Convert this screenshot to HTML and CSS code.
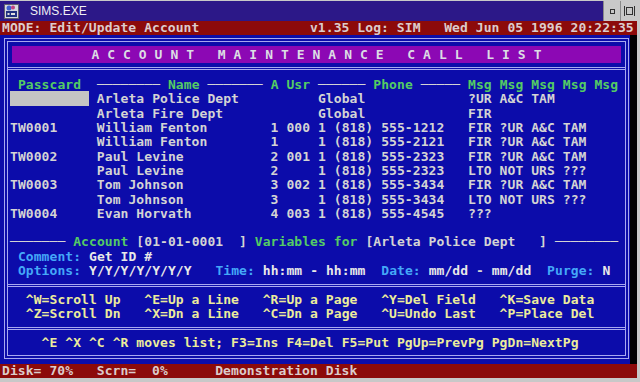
FILE: index.html
```html
<!DOCTYPE html>
<html lang="en">
<head>
    <meta charset="UTF-8">
    <meta name="viewport" content="width=device-width, initial-scale=1.0">
    <title>SIMS.EXE</title>
    <link rel="stylesheet" href="styles.css">
</head>
<body>
<div class="window">
    <div class="titlebar">
        <svg class="title-icon" width="15" height="15" viewBox="0 0 15 15">
            <rect x="0.5" y="0.5" width="14" height="14" fill="#d8d8e0" stroke="#606070"/>
            <circle cx="5" cy="4" r="2.5" fill="#4060d0"/>
            <circle cx="9" cy="3.5" r="2" fill="#c04080"/>
            <rect x="2" y="7" width="11" height="6" fill="#203080"/>
            <rect x="3.5" y="9" width="2" height="2" fill="#e0e0e0"/>
            <rect x="7" y="9" width="4" height="2" fill="#e0e0e0"/>
        </svg>
        <span class="title-text">SIMS.EXE</span>
        <div class="btns">
            <div class="btn">
                <svg width="5" height="5" viewBox="0 0 5 5"><rect x="0.5" y="0.5" width="4" height="4" fill="none" stroke="#303030"/></svg>
            </div>
            <div class="btn">
                <svg width="11" height="10" viewBox="0 0 11 10">
                    <rect x="0" y="0" width="1" height="10" fill="#303030"/>
                    <rect x="10" y="0" width="1" height="10" fill="#303030"/>
                    <rect x="2.5" y="1.5" width="6" height="7" fill="none" stroke="#303030"/>
                </svg>
            </div>
        </div>
    </div>

    <div class="console">
        <div class="row modebar">MODE: Edit/Update Account              v1.35 Log: SIM   Wed Jun 05 1996 20:22:35</div>

        <div class="screen">
            <div class="frame">
                <div class="banner">A C C O U N T   M A I N T E N A N C E   C A L L   L I S T</div>
                <div class="rule top-rule"></div>

                <div class="row in"> <span class="grn">Passcard</span>  ──────── <span class="grn">Name</span> ─────── <span class="grn">A Usr</span> ────── <span class="grn">Phone</span> ───── <span class="grn">Msg Msg Msg Msg Msg</span></div>
                <div class="row in"><span class="field">          </span> Arleta Police Dept          Global             ?UR A&amp;C TAM</div>
                <div class="row in">           Arleta Fire Dept            Global             FIR</div>
                <div class="row in">TW0001     William Fenton        1 000 1 (818) 555-1212   FIR ?UR A&amp;C TAM</div>
                <div class="row in">           William Fenton        1     1 (818) 555-2121   FIR ?UR A&amp;C TAM</div>
                <div class="row in">TW0002     Paul Levine           2 001 1 (818) 555-2323   FIR ?UR A&amp;C TAM</div>
                <div class="row in">           Paul Levine           2     1 (818) 555-2323   LTO NOT URS ???</div>
                <div class="row in">TW0003     Tom Johnson           3 002 1 (818) 555-3434   FIR ?UR A&amp;C TAM</div>
                <div class="row in">           Tom Johnson           3     1 (818) 555-3434   LTO NOT URS ???</div>
                <div class="row in">TW0004     Evan Horvath          4 003 1 (818) 555-4545   ???</div>
                <div class="row in"></div>
                <div class="row in">─────── <span class="grn">Account</span> [01-01-0001  ] <span class="grn">Variables for</span> [Arleta Police Dept   ] ────────</div>
                <div class="row in"> <span class="lbl">Comment:</span> <span class="val">Get ID #</span></div>
                <div class="row in"> <span class="lbl">Options:</span> <span class="val">Y/Y/Y/Y/Y/Y/Y</span>   <span class="lbl">Time:</span> <span class="val">hh:mm - hh:mm</span>  <span class="lbl">Date:</span> <span class="val">mm/dd</span> - <span class="val">mm/dd</span>  <span class="lbl">Purge:</span> <span class="val">N</span></div>
                <div class="sep"></div>
                <div class="row in yel">  ^W=Scroll Up   ^E=Up a Line   ^R=Up a Page   ^Y=Del Field   ^K=Save Data</div>
                <div class="row in yel">  ^Z=Scroll Dn   ^X=Dn a Line   ^C=Dn a Page   ^U=Undo Last   ^P=Place Del</div>
                <div class="sep"></div>
                <div class="row in yel">    ^E ^X ^C ^R moves list; F3=Ins F4=Del F5=Put PgUp=PrevPg PgDn=NextPg</div>
            </div>
        </div>

        <div class="row status">Disk= 70%   Scrn=  0%      Demonstration Disk</div>
    </div>
</div>
</body>
</html>
```

FILE: styles.css
```css
body {
    margin: 0;
    width: 640px;
    height: 382px;
    overflow: hidden;
    background: #c8c8c8;
}
.window {
    width: 637px;
}
.titlebar {
    height: 20px;
    margin-top: 1px;
    background: #2c1888;
    display: flex;
    align-items: center;
}
.title-icon {
    margin-left: 4px;
}
.title-text {
    flex: 1;
    margin-left: 11px;
    font: 12px "Liberation Sans", Arial, sans-serif;
    color: #f0f0f4;
}
.btns {
    display: flex;
    height: 20px;
}
.btn {
    width: 17px;
    height: 20px;
    box-sizing: border-box;
    background: #c8c8c8;
    border-left: 1px solid #8a8a8a;
    display: flex;
    align-items: center;
    justify-content: center;
}
.console {
    background: #000;
    font-family: "DejaVu Sans Mono", monospace;
    font-size: 13px;
    font-weight: bold;
    letter-spacing: 0.07px;
    color: #d4d4d4;
}
.row {
    height: 14.3px;
    line-height: 14.3px;
    white-space: pre;
}
.modebar,
.status {
    background: #8c0a0a;
    color: #dccccc;
    padding-left: 2px;
}
.screen {
    width: 630px;
    height: 328.9px;
    padding-top: 2.7px;
    box-sizing: border-box;
    background: #0c0caa;
}
.frame {
    width: 625px;
    margin-left: 4px;
    box-sizing: border-box;
    border: 4px double #a8a8f0;
    padding-bottom: 5.1px;
}
.banner {
    margin: 4px 4px 0;
    height: 17px;
    line-height: 17px;
    background: #8c08b4;
    color: #dcdce4;
    text-align: center;
    white-space: pre;
}
.rule {
    border-top: 3px double #a8a8f0;
}
.top-rule {
    margin-top: 4px;
    margin-bottom: 8.2px;
}
.sep {
    height: 14.3px;
    box-sizing: border-box;
    padding-top: 5.6px;
}
.sep::before {
    content: "";
    display: block;
    border-top: 3px double #a8a8f0;
}
.in {
    padding-left: 2px;
}
.grn {
    color: #54cc64;
}
.lbl {
    color: #44a8f8;
}
.val {
    color: #e8e8e8;
}
.yel {
    color: #ecec9c;
}
.field {
    background: #c4c4c4;
}
```
